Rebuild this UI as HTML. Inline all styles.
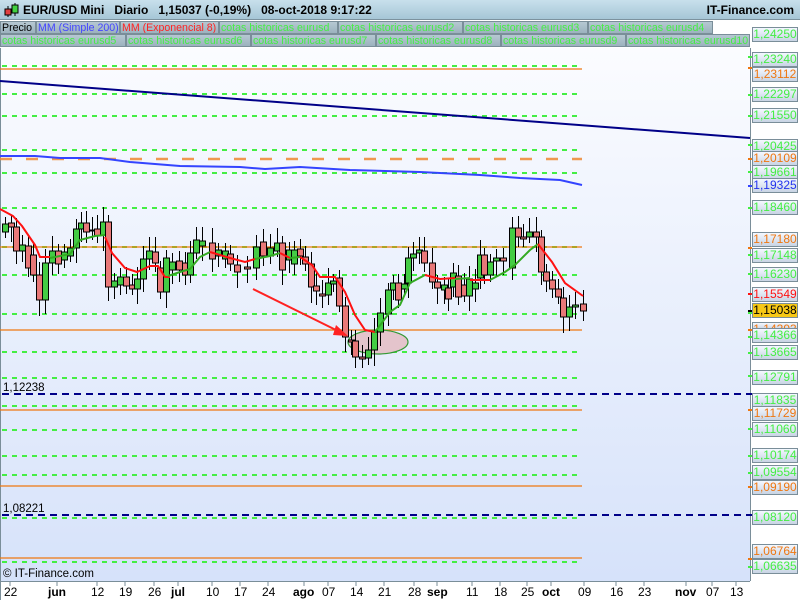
<!DOCTYPE html>
<html><head><meta charset="utf-8"><style>
body{margin:0;width:800px;height:600px;overflow:hidden;font-family:"Liberation Sans",sans-serif;background:#fff;position:relative}
.hdr{position:absolute;left:0;top:0;width:800px;height:20px;background:linear-gradient(#c8e0ec,#a6c6d6);border-bottom:1px solid #7c929e;box-sizing:border-box}
.hdr .t{position:absolute;left:23px;top:3px;font-size:12px;font-weight:bold;color:#000;white-space:pre}
.hdr .r{position:absolute;right:6px;top:3px;font-size:12px;font-weight:bold}
.tabs{position:absolute;left:0;top:20px;width:750px;height:28px;background:#fff}
.tab{position:absolute;height:13px;font-size:10.6px;line-height:12px;padding:0 1px;box-sizing:border-box;background:linear-gradient(#b6c8d2,#9cb2be);border:1px solid #7a8e99;color:#44ee44;white-space:nowrap;overflow:hidden}
.ax{position:absolute;left:752px;width:46px;height:15px;box-sizing:border-box;border:1px solid #7a8e99;background:linear-gradient(#f4f8ff,#c8d4e4);font-size:12px;line-height:13px;text-align:center;color:#44ee44}
.bt{position:absolute;top:585px;font-size:12px;color:#000}
.bt b{font-weight:bold}
</style></head><body>
<div class="hdr">
<svg style="position:absolute;left:3px;top:2px" width="16" height="16"><line x1="5" y1="4" x2="5" y2="15" stroke="#000"/><rect x="2" y="7" width="6" height="6" fill="#e04040" stroke="#000"/><line x1="12" y1="1" x2="12" y2="14" stroke="#000"/><rect x="9" y="3" width="6" height="8" fill="#40d040" stroke="#000"/></svg>
<span class="t">EUR/USD Mini   Diario   1,15037 (-0,19%)   08-oct-2018 9:17:22</span>
<span class="r">IT-Finance.com</span>
</div>
<div class="tabs">
<div class="tab" style="left:0;top:1px;width:36px;color:#000">Precio</div>
<div class="tab" style="left:36px;top:1px;width:84px;color:#4444ff">MM (Simple 200)</div>
<div class="tab" style="left:120px;top:1px;width:99px;color:#ff2222">MM (Exponencial 8)</div>
<div class="tab" style="left:219px;top:1px;width:119px">cotas historicas eurusd</div>
<div class="tab" style="left:338px;top:1px;width:125px">cotas historicas eurusd2</div>
<div class="tab" style="left:463px;top:1px;width:125px">cotas historicas eurusd3</div>
<div class="tab" style="left:588px;top:1px;width:125px">cotas historicas eurusd4</div>
<div class="tab" style="left:0;top:14px;width:126px">cotas historicas eurusd5</div>
<div class="tab" style="left:126px;top:14px;width:125px">cotas historicas eurusd6</div>
<div class="tab" style="left:251px;top:14px;width:125px">cotas historicas eurusd7</div>
<div class="tab" style="left:376px;top:14px;width:125px">cotas historicas eurusd8</div>
<div class="tab" style="left:501px;top:14px;width:125px">cotas historicas eurusd9</div>
<div class="tab" style="left:626px;top:14px;width:124px">cotas historicas eurusd10</div>
</div>
<svg style="position:absolute;left:0;top:48px" width="800" height="552" viewBox="0 48 800 552">
<defs><linearGradient id="bg" x1="0" y1="0" x2="0" y2="1"><stop offset="0" stop-color="#fbfcff"/><stop offset="1" stop-color="#d6e2fa"/></linearGradient></defs>
<rect x="0" y="48" width="750" height="533" fill="url(#bg)"/>
<line x1="0.5" y1="48" x2="0.5" y2="600" stroke="#7a8e99"/>
<line x1="750.5" y1="34" x2="750.5" y2="581" stroke="#7a8e99"/>
<line x1="0" y1="581.5" x2="750" y2="581.5" stroke="#7a8e99"/>
<g stroke="#44ee44" stroke-width="2" stroke-dasharray="5,5" fill="none">
<path d="M2 66H582M2 94H582M2 116H582M2 150H582M2 173H582M2 208H582M2 247H582M2 275H582M2 314H582M2 352H582M2 378H582M2 406H582M2 430H582M2 456H582M2 475H582M2 518H582M2 562H582"/>
</g>
<g stroke="#ee7711" stroke-width="1.2" fill="none"><path d="M0 69H582M0 247H582M0 330H582M0 410H582M0 486H582M0 558H582"/></g>
<path d="M0 159H582" stroke="#ee8833" stroke-width="2.5" stroke-dasharray="12,14" opacity=".85"/>
<g stroke="#000088" stroke-width="2" stroke-dasharray="7,5"><path d="M2 394H750M2 515H750"/></g>
<text x="3" y="391" font-size="11.5" font-family="Liberation Sans">1,12238</text>
<text x="3" y="512" font-size="11.5" font-family="Liberation Sans">1,08221</text>
<line x1="0" y1="81" x2="750" y2="138" stroke="#000088" stroke-width="2"/>
<polyline points="0,156 35,156 60,158 100,158 130,162 180,166 240,167 265,169 300,167 350,170 420,172 480,175 520,178 560,180 582,185" fill="none" stroke="#3344ff" stroke-width="2"/>
<ellipse cx="378" cy="342" rx="30" ry="12" fill="#e4c4cc" stroke="#339933" stroke-width="1.2"/>
<g id="c"></g>
<polyline points="253,289 340,332" stroke="#ff2222" stroke-width="2" fill="none"/>
<polygon points="348,336 336,325 333,335" fill="#ff2222"/>
<polyline points="0,209 13,216 22,226 35,245 40,257 50,257" fill="none" stroke="#ff1111" stroke-width="2"/>
<polyline points="50,258 70,254 80,240 95,236 105,235" fill="none" stroke="#33aa22" stroke-width="2"/>
<polyline points="105,237 112,253 125,268 137,272 150,266 158,266 165,277 170,277" fill="none" stroke="#ff1111" stroke-width="2"/>
<polyline points="168,276 180,272 190,269 200,257 210,252" fill="none" stroke="#33aa22" stroke-width="2"/>
<polyline points="210,252 230,258 245,262 255,259" fill="none" stroke="#ff1111" stroke-width="2"/>
<polyline points="255,259 270,256 280,253" fill="none" stroke="#33aa22" stroke-width="2"/>
<polyline points="280,253 290,258" fill="none" stroke="#ff1111" stroke-width="2"/>
<polyline points="290,258 300,257" fill="none" stroke="#33aa22" stroke-width="2"/>
<polyline points="300,257 312,265 320,277 335,277 345,292 355,315 365,330 375,332" fill="none" stroke="#ff1111" stroke-width="2"/>
<polyline points="375,332 390,312 400,305 410,283 425,275" fill="none" stroke="#33aa22" stroke-width="2"/>
<polyline points="425,275 440,279 455,278" fill="none" stroke="#ff1111" stroke-width="2"/>
<polyline points="455,279 470,278" fill="none" stroke="#33aa22" stroke-width="2"/>
<polyline points="470,280 490,280" fill="none" stroke="#ff1111" stroke-width="2"/>
<polyline points="490,280 505,272 515,265 530,250 538,244" fill="none" stroke="#33aa22" stroke-width="2"/>
<polyline points="538,244 552,262 565,283 583,296" fill="none" stroke="#ff1111" stroke-width="2"/>
<path d="M0 582V586M10 582V586M57 582V586M97 582V586M125 582V586M154 582V586M178 582V586M212 582V586M240 582V586M268 582V586M304 582V586M328 582V586M356 582V586M384 582V586M414 582V586M437 582V586M472 582V586M500 582V586M527 582V586M551 582V586M584 582V586M616 582V586M644 582V586M686 582V586M712 582V586M736 582V586" stroke="#7a8e99"/>
<g stroke-width="2"><path d="M748 42h4M748 57h4M748 95h4M748 116h4M748 145h4M748 172h4M748 208h4M748 255h4M748 274h4M748 313h4M748 337h4M748 353h4M748 376h4M748 429h4M748 456h4M748 473h4M748 567h4" stroke="#44ee44"/><path d="M748 68h4M748 159h4M748 248h4M748 330h4M748 410h4M748 487h4M748 559h4" stroke="#ee7711"/><path d="M748 186h4" stroke="#3344ff"/><path d="M748 294h4" stroke="#ff1111"/><path d="M748 311h4" stroke="#000"/><path d="M748 394h4M748 515h4" stroke="#000088"/></g>
</svg>
<div class="ax" style="top:27px">1,24250</div>
<div class="ax" style="top:52px">1,23240</div>
<div class="ax" style="top:67px;color:#ee7711">1,23112</div>
<div class="ax" style="top:87px">1,22297</div>
<div class="ax" style="top:108px">1,21550</div>
<div class="ax" style="top:139px">1,20425</div>
<div class="ax" style="top:151px;color:#ee7711">1,20109</div>
<div class="ax" style="top:165px">1,19661</div>
<div class="ax" style="top:178px;color:#2233ee">1,19325</div>
<div class="ax" style="top:200px">1,18460</div>
<div class="ax" style="top:232px;color:#ee7711">1,17180</div>
<div class="ax" style="top:248px">1,17148</div>
<div class="ax" style="top:267px">1,16230</div>
<div class="ax" style="top:287px;color:#ff1111">1,15549</div>
<div class="ax" style="top:303px;color:#000;background:#f7c815">1,15038</div>
<div class="ax" style="top:322px;color:#ee7711;height:8px;overflow:hidden">1,14393</div>
<div class="ax" style="top:328px">1,14366</div>
<div class="ax" style="top:345px">1,13665</div>
<div class="ax" style="top:370px">1,12791</div>
<div class="ax" style="top:393px">1,11835</div>
<div class="ax" style="top:406px;color:#ee7711">1,11729</div>
<div class="ax" style="top:422px">1,11060</div>
<div class="ax" style="top:448px">1,10174</div>
<div class="ax" style="top:465px">1,09554</div>
<div class="ax" style="top:480px;color:#ee7711">1,09190</div>
<div class="ax" style="top:510px">1,08120</div>
<div class="ax" style="top:544px;color:#ee7711">1,06764</div>
<div class="ax" style="top:559px">1,06635</div>
<div style="position:absolute;left:3px;top:568px;font-size:11.5px">© IT-Finance.com</div>
<div class="bt" style="left:4px">22</div><div class="bt" style="left:48px"><b>jun</b></div><div class="bt" style="left:91px">12</div><div class="bt" style="left:119px">19</div><div class="bt" style="left:148px">26</div><div class="bt" style="left:171px"><b>jul</b></div><div class="bt" style="left:206px">10</div><div class="bt" style="left:234px">17</div><div class="bt" style="left:262px">24</div><div class="bt" style="left:293px"><b>ago</b></div><div class="bt" style="left:322px">07</div><div class="bt" style="left:350px">14</div><div class="bt" style="left:378px">21</div><div class="bt" style="left:408px">28</div><div class="bt" style="left:427px"><b>sep</b></div><div class="bt" style="left:466px">11</div><div class="bt" style="left:494px">18</div><div class="bt" style="left:521px">25</div><div class="bt" style="left:542px"><b>oct</b></div><div class="bt" style="left:578px">09</div><div class="bt" style="left:610px">16</div><div class="bt" style="left:638px">23</div><div class="bt" style="left:675px"><b>nov</b></div><div class="bt" style="left:706px">07</div><div class="bt" style="left:730px">13</div>
<script>
var d=[[5,'g',224,232],[11,'r',223,227],[16,'r',227,251],[22,'g',245,251],[28,'r',246,268],[33,'r',255,275],[39,'r',275,300],[45,'g',263,300],[52,'g',251,263],[58,'r',251,264],[64,'g',252,260],[70,'g',248,256],[76,'g',229,248],[81,'g',223,229],[86,'r',223,232],[92,'r',230,231],[97,'r',229,236],[103,'g',222,235],[108,'r',222,287],[114,'g',281,287],[120,'g',277,285],[126,'r',277,286],[132,'r',285,289],[137,'g',279,289],[143,'g',259,279],[149,'g',251,259],[155,'r',252,263],[160,'r',268,292],[166,'g',258,292],[172,'g',262,270],[179,'r',261,270],[185,'r',263,275],[190,'g',253,275],[196,'g',240,253],[202,'g',241,246],[212,'r',243,259],[218,'g',250,256],[225,'g',251,259],[230,'r',254,264],[237,'r',265,272],[247,'r',267,269],[256,'g',247,268],[263,'r',242,256],[270,'g',248,256],[277,'g',243,251],[282,'r',243,270],[289,'g',250,260],[294,'g',250,264],[300,'r',249,256],[305,'r',257,264],[311,'r',264,287],[316,'r',286,291],[322,'r',294,296],[328,'g',283,295],[333,'g',281,284],[339,'r',278,306],[345,'r',306,337],[351,'r',340,342],[355,'r',341,357],[362,'r',357,359],[368,'g',350,358],[374,'g',332,350],[380,'g',313,332],[388,'g',290,314],[393,'g',283,290],[398,'r',283,300],[404,'g',284,289],[408,'g',258,283],[413,'g',254,258],[419,'g',250,253],[424,'r',251,263],[432,'r',263,282],[437,'r',282,288],[444,'g',285,290],[448,'r',288,299],[453,'g',273,287],[458,'r',276,297],[464,'r',285,296],[469,'g',279,296],[475,'g',283,289],[480,'g',255,278],[484,'r',255,275],[490,'g',262,275],[496,'g',258,261],[503,'r',258,261],[512,'g',228,268],[518,'r',228,237],[523,'r',237,239],[529,'g',232,237],[536,'r',232,237],[541,'r',237,272],[546,'r',272,281],[552,'r',280,289],[558,'r',289,297],[563,'r',298,317],[569,'g',307,317],[575,'g',305,307],[583,'r',304,311]];
var s='';d.forEach(function(c,i){var x=c[0],t=c[2],b=c[3],h=7+(i*37%9),l=6+(i*53%11);
s+='<line x1="'+(x+0.5)+'" y1="'+(t-h)+'" x2="'+(x+0.5)+'" y2="'+(b+l)+'" stroke="#000" stroke-width="1"/>';
s+='<rect x="'+(x-2.5)+'" y="'+t+'" width="6" height="'+Math.max(1,b-t)+'" fill="'+(c[1]=='g'?'#44cc44':'#e87878')+'" stroke="#000" stroke-width="1"/>';});
document.getElementById('c').innerHTML=s;
</script>
</body></html>
